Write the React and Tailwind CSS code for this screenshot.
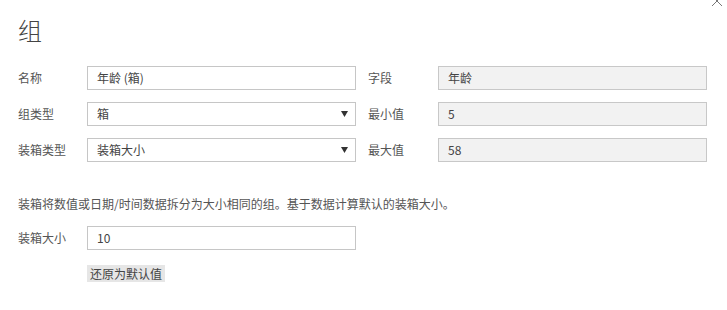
import React from 'react';

const font = { fontFamily: '"Segoe UI", "Noto Sans CJK SC", sans-serif' };

function Label({ children, w = 'w-[69px]' }) {
  return <div className={`${w} shrink-0 text-[12px] text-[#555]`}>{children}</div>;
}

function TextBox({ value, disabled }) {
  return (
    <div
      className={`h-[24px] w-[269px] shrink-0 border px-[9px] flex items-center text-[12px] text-[#444] ${
        disabled ? 'bg-[#f2f2f2] border-[#c8c8c8]' : 'bg-white border-[#c6c6c6]'
      }`}
    >
      {value}
    </div>
  );
}

function SelectBox({ value }) {
  return (
    <div className="h-[24px] w-[269px] shrink-0 border border-[#c6c6c6] bg-white pl-[9px] pr-[7px] flex items-center justify-between text-[12px] text-[#444]">
      <span>{value}</span>
      <svg width="7" height="6" viewBox="0 0 7 6">
        <path d="M0 0 H7 L3.5 6 Z" fill="#333" />
      </svg>
    </div>
  );
}

export default function App() {
  return (
    <div className="relative w-[727px] h-[310px] bg-white overflow-hidden" style={font}>
      {/* 关闭按钮 */}
      <svg className="absolute left-[711px] top-[-5px]" width="12" height="12" viewBox="0 0 12 12">
        <path d="M1 1 L11 11 M11 1 L1 11" stroke="#777" strokeWidth="1" fill="none" />
      </svg>

      <div className="pl-[18px] pt-[14px]">
        <h1 className="text-[24px] font-light leading-[32px] text-[#444]">组</h1>

        <div className="mt-[20px] flex flex-col gap-[12px]">
          <div className="flex items-center">
            <Label>名称</Label>
            <TextBox value="年龄 (箱)" />
            <div className="w-[12px]" />
            <Label w="w-[70px]">字段</Label>
            <TextBox value="年龄" disabled />
          </div>
          <div className="flex items-center">
            <Label>组类型</Label>
            <SelectBox value="箱" />
            <div className="w-[12px]" />
            <Label w="w-[70px]">最小值</Label>
            <TextBox value="5" disabled />
          </div>
          <div className="flex items-center">
            <Label>装箱类型</Label>
            <SelectBox value="装箱大小" />
            <div className="w-[12px]" />
            <Label w="w-[70px]">最大值</Label>
            <TextBox value="58" disabled />
          </div>
        </div>

        <p className="mt-[34px] text-[12px] leading-[16px] text-[#555]">
          装箱将数值或日期/时间数据拆分为大小相同的组。基于数据计算默认的装箱大小。
        </p>

        <div className="mt-[14px] flex items-center">
          <Label>装箱大小</Label>
          <TextBox value="10" />
        </div>

        <div className="mt-[15px] pl-[69px] flex">
          <button className="h-[17px] px-[3px] bg-[#e6e6e6] text-[12px] leading-[17px] text-[#444]">
            还原为默认值
          </button>
        </div>
      </div>
    </div>
  );
}
